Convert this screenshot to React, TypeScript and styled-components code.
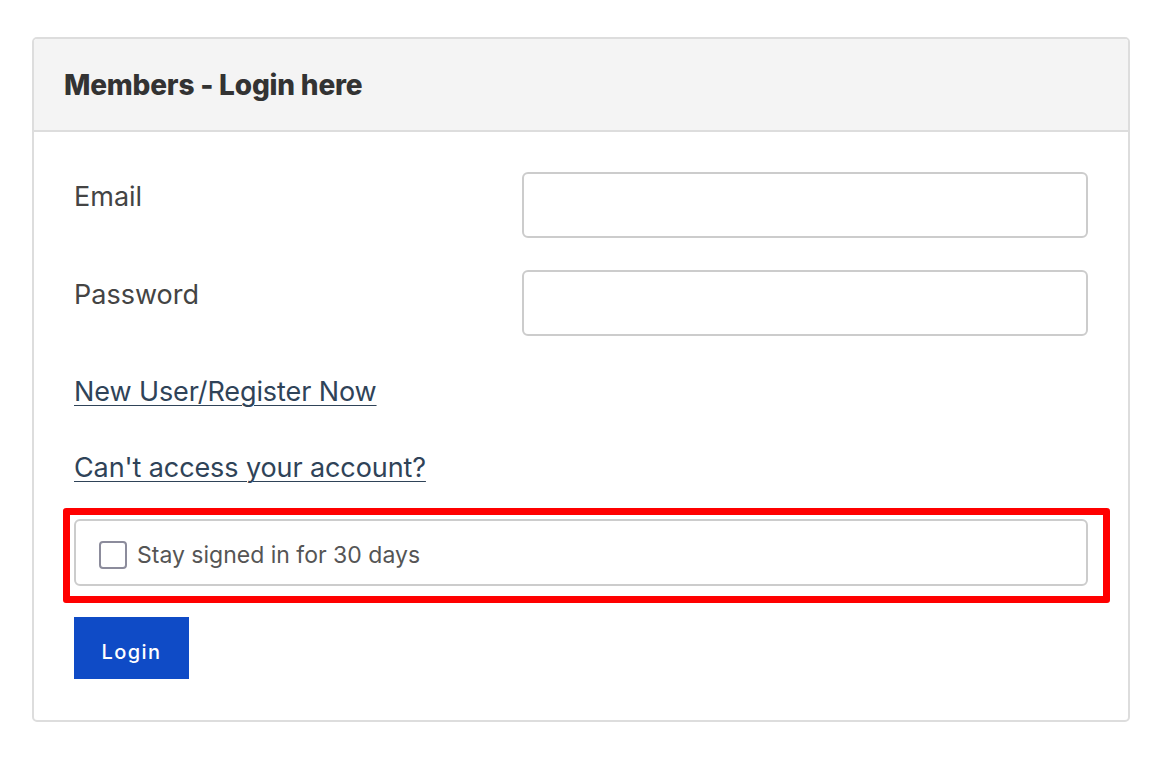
import styled, { createGlobalStyle } from "styled-components";
import { useState } from "react";

const GlobalStyle = createGlobalStyle`
  * {
    box-sizing: border-box;
  }
  body {
    margin: 0;
    background: #ffffff;
    font-family: Inter, "Liberation Sans", sans-serif;
    color: #444444;
  }
`;

const Page = styled.div`
  padding: 37px 34px 40px 32px;
`;

const Card = styled.section`
  border: 2px solid #dddddd;
  border-radius: 5px;
  background: #ffffff;
  overflow: hidden;
`;

const CardHeader = styled.header`
  height: 93px;
  display: flex;
  align-items: center;
  padding: 0 30px;
  background: #f4f4f4;
  border-bottom: 2px solid #dddddd;
`;

const Title = styled.h2`
  margin: 0;
  font-size: 28px;
  font-weight: 800;
  color: #333333;
  letter-spacing: -0.2px;
`;

const CardBody = styled.div`
  padding: 40px 40px 41px 40px;
  display: flex;
  flex-direction: column;
`;

const FieldRow = styled.div<{ $gap: number }>`
  display: grid;
  grid-template-columns: 448px 1fr;
  margin-bottom: ${(p) => p.$gap}px;
`;

const Label = styled.label`
  font-size: 27px;
  line-height: 36px;
  padding-top: 7px;
  color: #444444;
`;

const TextInput = styled.input`
  height: 66px;
  border: 2px solid #cccccc;
  border-radius: 6px;
  background: #ffffff;
  font-size: 20px;
  padding: 0 16px;
  outline: none;
`;

const LinkText = styled.a<{ $gap: number }>`
  align-self: flex-start;
  font-size: 27px;
  line-height: 36px;
  color: #2f4358;
  text-decoration: underline;
  text-underline-offset: 4px;
  text-decoration-thickness: 1px;
  letter-spacing: -0.1px;
  margin-bottom: ${(p) => p.$gap}px;
`;

const Highlight = styled.div`
  position: relative;
  margin-bottom: 31px;
  &::after {
    content: "";
    position: absolute;
    left: -11px;
    top: -11px;
    right: -22px;
    bottom: -17px;
    border: 7px solid #ff0000;
    border-radius: 3px;
    pointer-events: none;
  }
`;

const RememberBox = styled.label`
  display: flex;
  align-items: center;
  gap: 10px;
  height: 67px;
  padding: 5px 23px 0;
  border: 2px solid #cccccc;
  border-radius: 6px;
  font-size: 23px;
  color: #555555;
  cursor: pointer;
`;

const CheckSquare = styled.span<{ $checked: boolean }>`
  width: 28px;
  height: 28px;
  border: 2px solid #8c8c9c;
  border-radius: 4px;
  background: ${(p) => (p.$checked ? "#0f4bc6" : "#ffffff")};
  flex-shrink: 0;
`;

const LoginButton = styled.button`
  align-self: flex-start;
  width: 115px;
  height: 62px;
  padding: 8px 0 0;
  border: none;
  background: #0f4bc6;
  color: #ffffff;
  font-family: Inter, "Liberation Sans", sans-serif;
  font-size: 20px;
  font-weight: 500;
  letter-spacing: 1.4px;
  cursor: pointer;
`;

export default function App() {
  const [staySigned, setStaySigned] = useState<boolean>(false);

  return (
    <Page>
      <GlobalStyle />
      <Card>
        <CardHeader>
          <Title>Members - Login here</Title>
        </CardHeader>
        <CardBody>
          <FieldRow $gap={32}>
            <Label htmlFor="email">Email</Label>
            <TextInput id="email" type="email" />
          </FieldRow>
          <FieldRow $gap={38}>
            <Label htmlFor="password">Password</Label>
            <TextInput id="password" type="password" />
          </FieldRow>
          <LinkText href="#" $gap={40}>
            New User/Register Now
          </LinkText>
          <LinkText href="#" $gap={33}>
            Can't access your account?
          </LinkText>
          <Highlight>
            <RememberBox onClick={() => setStaySigned(!staySigned)}>
              <CheckSquare $checked={staySigned} />
              Stay signed in for 30 days
            </RememberBox>
          </Highlight>
          <LoginButton>Login</LoginButton>
        </CardBody>
      </Card>
    </Page>
  );
}
